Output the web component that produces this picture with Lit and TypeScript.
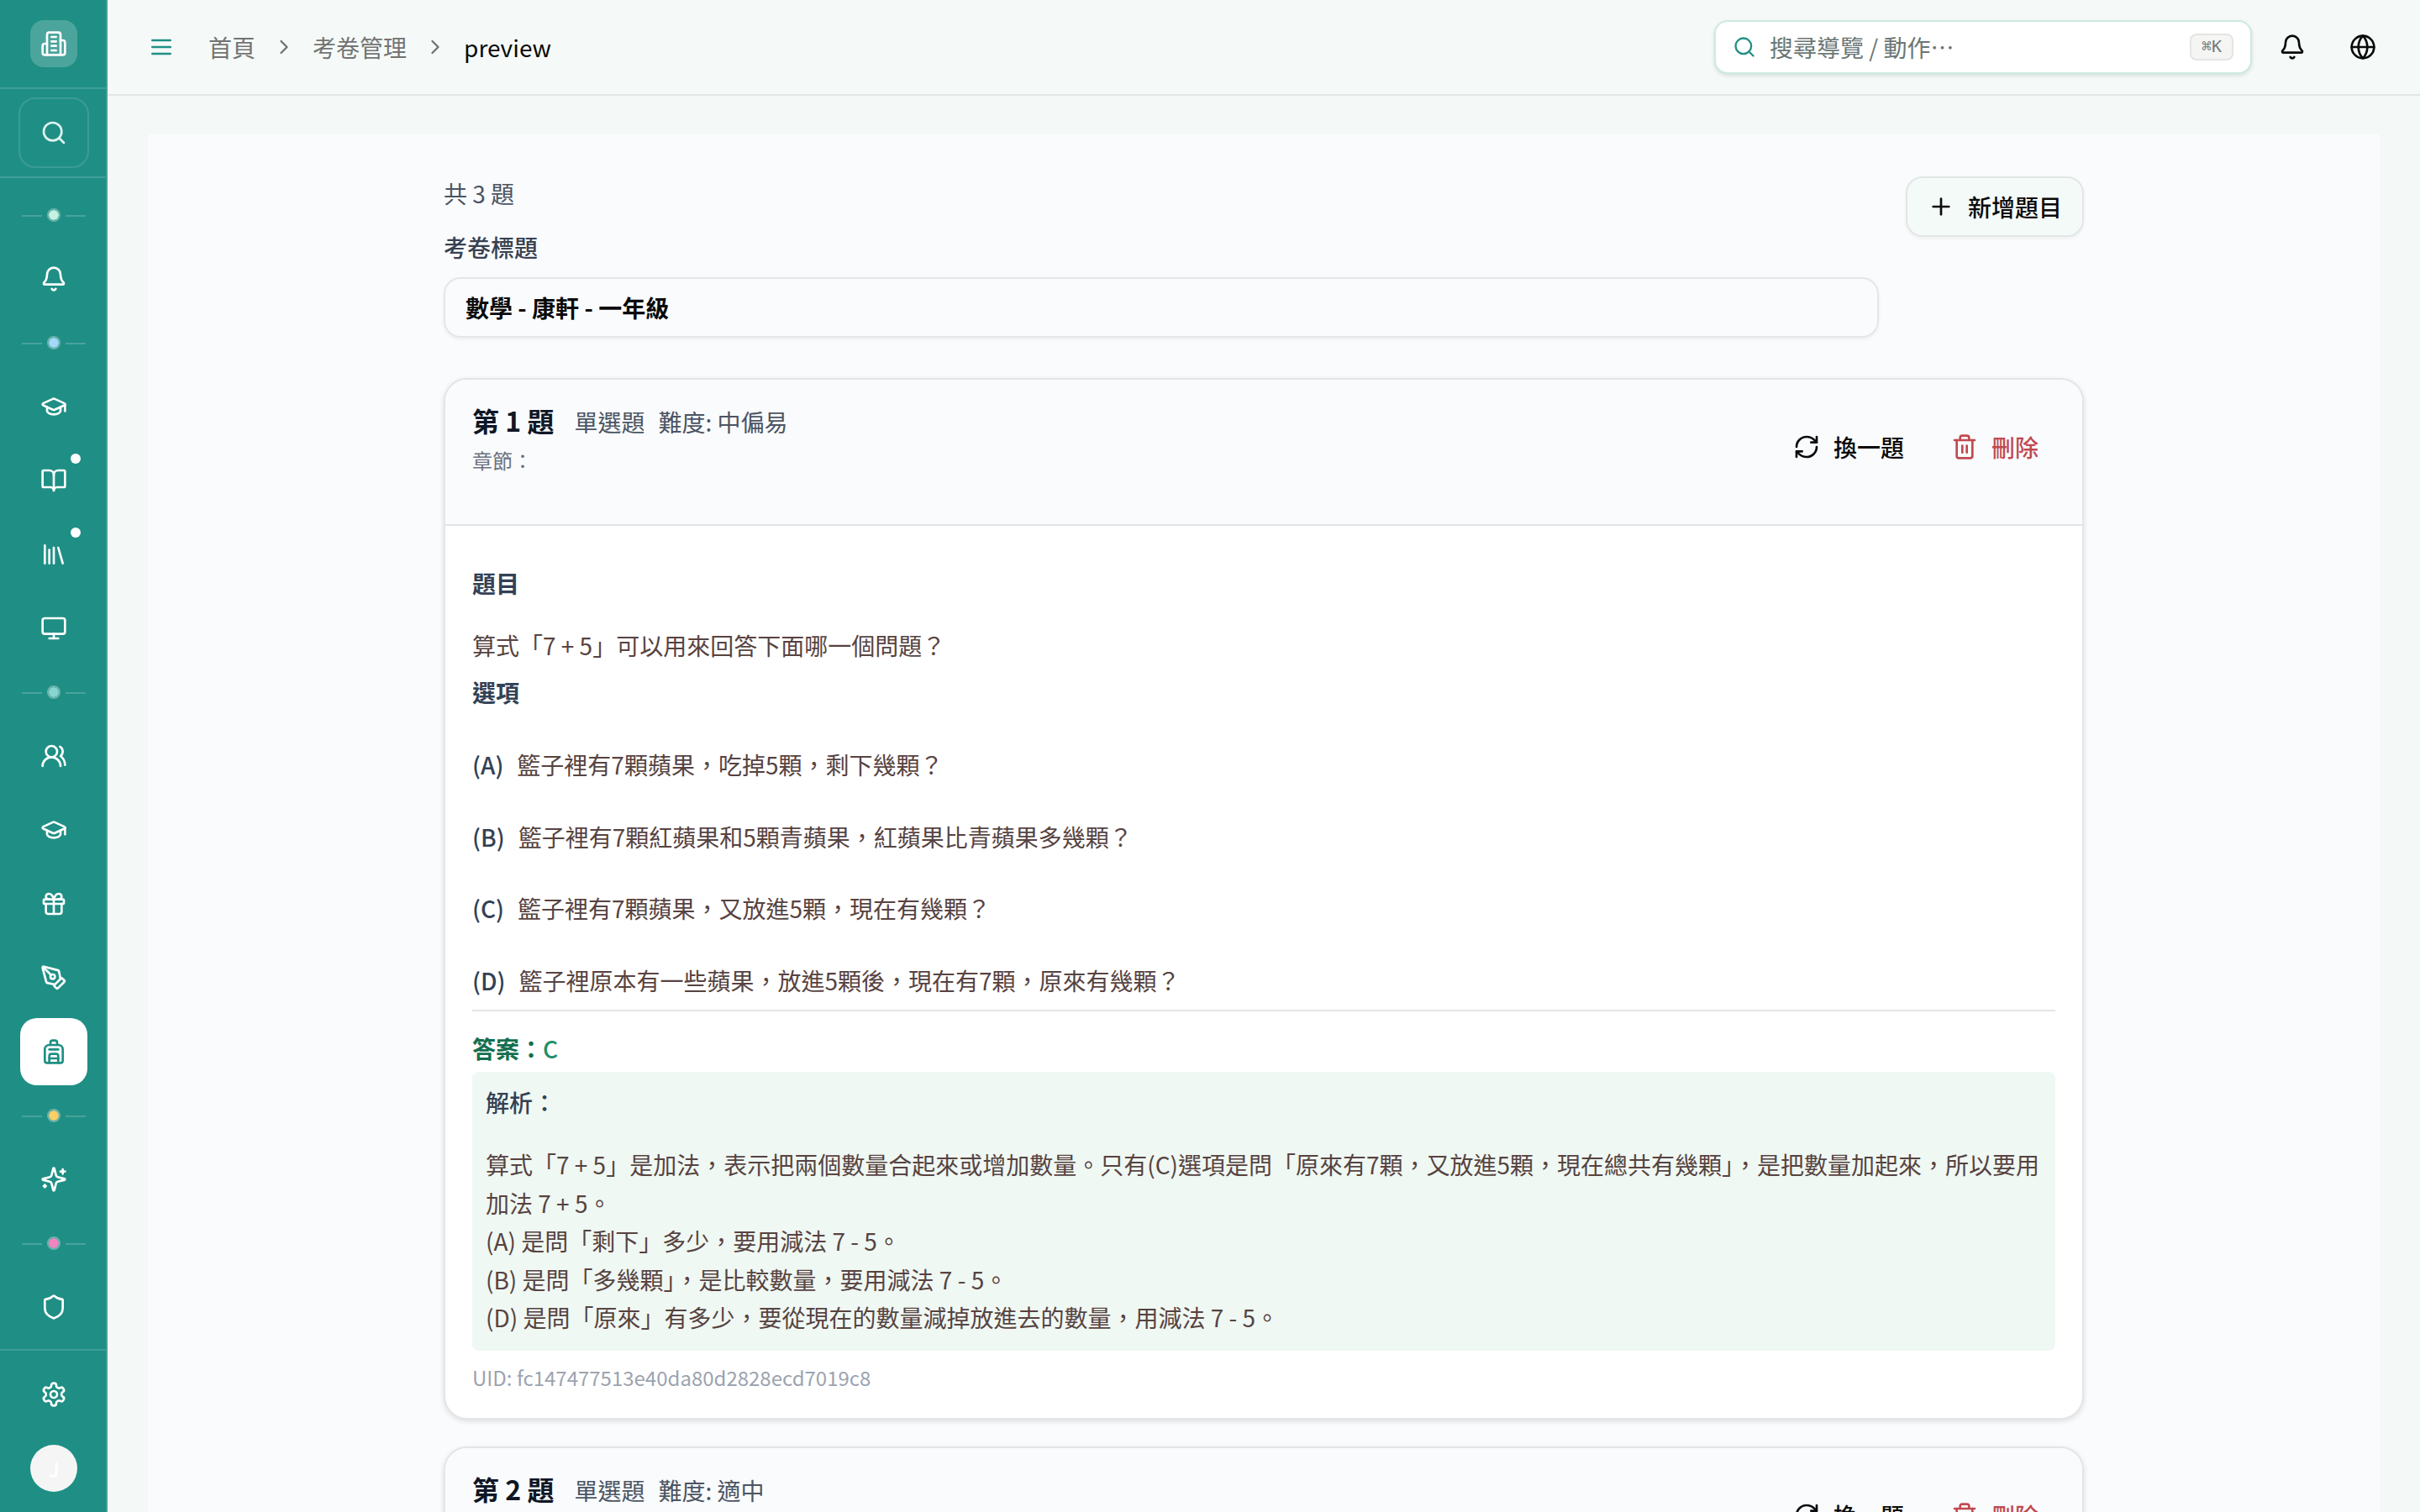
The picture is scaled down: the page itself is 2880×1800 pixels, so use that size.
import { LitElement, html, css, svg, nothing } from "lit";
import { customElement, property } from "lit/decorators.js";

const ICONS: Record<string, any> = {
  building: svg`<path d="M6 22V4a2 2 0 0 1 2-2h8a2 2 0 0 1 2 2v18Z"/><path d="M6 12H4a2 2 0 0 0-2 2v6a2 2 0 0 0 2 2h2"/><path d="M18 9h2a2 2 0 0 1 2 2v9a2 2 0 0 1-2 2h-2"/><path d="M10 6h4"/><path d="M10 10h4"/><path d="M10 14h4"/><path d="M10 18h4"/>`,
  search: svg`<circle cx="11" cy="11" r="8"/><path d="m21 21-4.3-4.3"/>`,
  bell: svg`<path d="M10.268 21a2 2 0 0 0 3.464 0"/><path d="M3.262 15.326A1 1 0 0 0 4 17h16a1 1 0 0 0 .74-1.673C19.41 13.956 18 12.499 18 8A6 6 0 0 0 6 8c0 4.499-1.411 5.956-2.738 7.326"/>`,
  cap: svg`<path d="M21.42 10.922a1 1 0 0 0-.019-1.838L12.83 5.18a2 2 0 0 0-1.66 0L2.6 9.08a1 1 0 0 0 0 1.832l8.57 3.908a2 2 0 0 0 1.66 0z"/><path d="M22 10v6"/><path d="M6 12.5V16a6 3 0 0 0 12 0v-3.5"/>`,
  book: svg`<path d="M12 7v14"/><path d="M3 18a1 1 0 0 1-1-1V4a1 1 0 0 1 1-1h5a4 4 0 0 1 4 4 4 4 0 0 1 4-4h5a1 1 0 0 1 1 1v13a1 1 0 0 1-1 1h-6a3 3 0 0 0-3 3 3 3 0 0 0-3-3z"/>`,
  library: svg`<path d="m16 6 4 14"/><path d="M12 6v14"/><path d="M8 8v12"/><path d="M4 4v16"/>`,
  monitor: svg`<rect width="20" height="14" x="2" y="3" rx="2"/><path d="M8 21h8"/><path d="M12 17v4"/>`,
  users: svg`<path d="M18 21a8 8 0 0 0-16 0"/><circle cx="10" cy="8" r="5"/><path d="M22 20c0-3.37-2-6.5-4-8a5 5 0 0 0-.45-8.3"/>`,
  gift: svg`<rect x="3" y="8" width="18" height="4" rx="1"/><path d="M12 8v13"/><path d="M19 12v7a2 2 0 0 1-2 2H7a2 2 0 0 1-2-2v-7"/><path d="M7.5 8a2.5 2.5 0 0 1 0-5A4.8 8 0 0 1 12 8a4.8 8 0 0 1 4.5-5 2.5 2.5 0 0 1 0 5"/>`,
  pen: svg`<path d="M15.707 21.293a1 1 0 0 1-1.414 0l-1.586-1.586a1 1 0 0 1 0-1.414l5.586-5.586a1 1 0 0 1 1.414 0l1.586 1.586a1 1 0 0 1 0 1.414z"/><path d="m18 13-1.375-6.874a1 1 0 0 0-.746-.776L3.235 2.028a1 1 0 0 0-1.207 1.207L5.35 15.879a1 1 0 0 0 .776.746L13 18"/><path d="m2.3 2.3 7.286 7.286"/><circle cx="11" cy="11" r="2"/>`,
  backpack: svg`<path d="M4 10a4 4 0 0 1 4-4h8a4 4 0 0 1 4 4v10a2 2 0 0 1-2 2H6a2 2 0 0 1-2-2z"/><path d="M8 10h8"/><path d="M8 18h8"/><path d="M8 22v-6a2 2 0 0 1 2-2h4a2 2 0 0 1 2 2v6"/><path d="M9 6V4a2 2 0 0 1 2-2h2a2 2 0 0 1 2 2v2"/>`,
  sparkles: svg`<path d="M9.937 15.5A2 2 0 0 0 8.5 14.063l-6.135-1.582a.5.5 0 0 1 0-.962L8.5 9.936A2 2 0 0 0 9.937 8.5l1.582-6.135a.5.5 0 0 1 .963 0L14.063 8.5A2 2 0 0 0 15.5 9.937l6.135 1.581a.5.5 0 0 1 0 .964L15.5 14.063a2 2 0 0 0-1.437 1.437l-1.582 6.135a.5.5 0 0 1-.963 0z"/><path d="M20 3v4"/><path d="M22 5h-4"/><path d="M4 17v2"/><path d="M5 18H3"/>`,
  shield: svg`<path d="M20 13c0 5-3.5 7.5-7.66 8.95a1 1 0 0 1-.67-.01C7.5 20.5 4 18 4 13V6a1 1 0 0 1 1-1c2 0 4.5-1.2 6.24-2.72a1.17 1.17 0 0 1 1.52 0C14.51 3.81 17 5 19 5a1 1 0 0 1 1 1z"/>`,
  settings: svg`<path d="M12.22 2h-.44a2 2 0 0 0-2 2v.18a2 2 0 0 1-1 1.73l-.43.25a2 2 0 0 1-2 0l-.15-.08a2 2 0 0 0-2.73.73l-.22.38a2 2 0 0 0 .73 2.73l.15.1a2 2 0 0 1 1 1.72v.51a2 2 0 0 1-1 1.74l-.15.09a2 2 0 0 0-.73 2.73l.22.38a2 2 0 0 0 2.73.73l.15-.08a2 2 0 0 1 2 0l.43.25a2 2 0 0 1 1 1.73V20a2 2 0 0 0 2 2h.44a2 2 0 0 0 2-2v-.18a2 2 0 0 1 1-1.73l.43-.25a2 2 0 0 1 2 0l.15.08a2 2 0 0 0 2.73-.73l.22-.39a2 2 0 0 0-.73-2.73l-.15-.08a2 2 0 0 1-1-1.74v-.5a2 2 0 0 1 1-1.74l.15-.09a2 2 0 0 0 .73-2.73l-.22-.38a2 2 0 0 0-2.73-.73l-.15.08a2 2 0 0 1-2 0l-.43-.25a2 2 0 0 1-1-1.73V4a2 2 0 0 0-2-2z"/><circle cx="12" cy="12" r="3"/>`,
  menu: svg`<path d="M4 6h16"/><path d="M4 12h16"/><path d="M4 18h16"/>`,
  chevron: svg`<path d="m9 18 6-6-6-6"/>`,
  globe: svg`<circle cx="12" cy="12" r="10"/><path d="M12 2a14.5 14.5 0 0 0 0 20 14.5 14.5 0 0 0 0-20"/><path d="M2 12h20"/>`,
  plus: svg`<path d="M5 12h14"/><path d="M12 5v14"/>`,
  refresh: svg`<path d="M3 12a9 9 0 0 1 9-9 9.75 9.75 0 0 1 6.74 2.74L21 8"/><path d="M21 3v5h-5"/><path d="M21 12a9 9 0 0 1-9 9 9.75 9.75 0 0 1-6.74-2.74L3 16"/><path d="M8 16H3v5"/>`,
  trash: svg`<path d="M3 6h18"/><path d="M19 6v14a2 2 0 0 1-2 2H7a2 2 0 0 1-2-2V6"/><path d="M8 6V4a2 2 0 0 1 2-2h4a2 2 0 0 1 2 2v2"/><path d="M10 11v6"/><path d="M14 11v6"/>`,
};

@customElement("ui-icon")
class UiIcon extends LitElement {
  @property() name = "";
  static styles = css`
    :host { display: block; width: 32px; height: 32px; flex: none; }
    svg { display: block; width: 100%; height: 100%; fill: none; stroke: currentColor; stroke-width: 2; stroke-linecap: round; stroke-linejoin: round; }
  `;
  render() {
    return html`<svg viewBox="0 0 24 24">${ICONS[this.name]}</svg>`;
  }
}

type NavEntry = { dot?: string; icon?: string; badge?: boolean; active?: boolean };

const NAV: NavEntry[] = [
  { dot: "#c3f3e0" },
  { icon: "bell" },
  { dot: "#a2d8f8" },
  { icon: "cap" },
  { icon: "book", badge: true },
  { icon: "library", badge: true },
  { icon: "monitor" },
  { dot: "#86d5d0" },
  { icon: "users" },
  { icon: "cap" },
  { icon: "gift" },
  { icon: "pen" },
  { icon: "backpack", active: true },
  { dot: "#fdd065" },
  { icon: "sparkles" },
  { dot: "#f285c1" },
  { icon: "shield" },
];

@customElement("side-rail")
class SideRail extends LitElement {
  static styles = css`
    :host { box-sizing: border-box; display: flex; flex-direction: column; width: 128px; height: 1800px; flex: none; background: #1f8f85; border-right: 2px solid #459f98; color: #fff; }
    .brand { box-sizing: border-box; height: 106px; padding: 24px 0 0 36px; border-bottom: 2px solid #3f9e96; }
    .logo { display: grid; place-items: center; width: 56px; height: 56px; border-radius: 16px; background: #4ca59c; }
    .find { box-sizing: border-box; height: 106px; padding: 10px 0 0 22px; border-bottom: 2px solid #3f9e96; }
    .find-box { box-sizing: border-box; display: grid; place-items: center; width: 84px; height: 84px; border: 2px solid #3b9c93; border-radius: 20px; color: #e0f3f0; }
    nav { flex: 1; padding: 8px 0 0 24px; display: flex; flex-direction: column; }
    .item { position: relative; display: grid; place-items: center; width: 80px; height: 80px; border-radius: 20px; }
    .item + .item { margin-top: 8px; }
    .item.active { background: #fff; color: #1f8f85; }
    .badge { position: absolute; top: 8px; right: 8px; width: 12px; height: 12px; border-radius: 50%; background: #fff; }
    .sep { display: flex; align-items: center; justify-content: center; gap: 6px; width: 80px; height: 72px; }
    .line { flex: none; width: 24px; height: 2px; margin-top: 2px; background: #48a39b; }
    .dot { flex: none; box-sizing: border-box; width: 16px; height: 16px; border-radius: 50%; border: 2px solid #6cb3ad; background-clip: padding-box; }
    .foot { box-sizing: border-box; height: 194px; padding: 12px 0 0 24px; border-top: 2px solid #3f9e96; }
    .avatar { display: grid; place-items: center; width: 56px; height: 56px; margin: 20px 0 0 12px; border-radius: 50%; background: #f5f5f5; color: #fff; font-size: 24px; font-weight: 500; }
  `;
  render() {
    return html`
      <div class="brand"><div class="logo"><ui-icon name="building"></ui-icon></div></div>
      <div class="find"><div class="find-box"><ui-icon name="search"></ui-icon></div></div>
      <nav>
        ${NAV.map((n) =>
          n.dot
            ? html`<div class="sep"><span class="line"></span><span class="dot" style="background-color:${n.dot}"></span><span class="line"></span></div>`
            : html`<div class="item ${n.active ? "active" : ""}"><ui-icon name=${n.icon!}></ui-icon>${n.badge ? html`<span class="badge"></span>` : nothing}</div>`
        )}
      </nav>
      <div class="foot">
        <div class="item"><ui-icon name="settings"></ui-icon></div>
        <div class="avatar">J</div>
      </div>
    `;
  }
}

@customElement("top-bar")
class TopBar extends LitElement {
  static styles = css`
    :host { box-sizing: border-box; display: flex; align-items: center; height: 114px; padding: 0 52px 0 48px; border-bottom: 2px solid #e2e7e6; background: #f5faf8; font-size: 28px; line-height: 40px; }
    .menu { color: #1f8f85; margin-right: 40px; }
    .crumbs { display: flex; align-items: center; gap: 20px; color: #737373; flex: 1; }
    .crumbs ui-icon { width: 28px; height: 28px; }
    .here { color: #0a0a0a; }
    .search { box-sizing: border-box; display: flex; align-items: center; width: 640px; height: 64px; padding: 0 20px; border: 2px solid #cdeae1; border-radius: 16px; background: #fff; color: #6b7775; box-shadow: 0 2px 5px rgba(0, 0, 0, 0.12); margin-right: 32px; }
    .search ui-icon { width: 28px; height: 28px; color: #1f8f85; margin-right: 16px; }
    .hint { flex: 1; }
    kbd { box-sizing: border-box; display: grid; place-items: center; width: 52px; height: 32px; border: 2px solid #e2e5e3; border-radius: 8px; background: #f5f5f4; font: 20px/24px "DejaVu Sans Mono", monospace; padding-bottom: 2px; color: #737a77; }
    .bell { margin-right: 52px; }
  `;
  render() {
    return html`
      <ui-icon class="menu" name="menu"></ui-icon>
      <div class="crumbs">
        <span>首頁</span><ui-icon name="chevron"></ui-icon><span>考卷管理</span><ui-icon name="chevron"></ui-icon><span class="here">preview</span>
      </div>
      <div class="search"><ui-icon name="search"></ui-icon><span class="hint">搜尋導覽 / 動作⋯</span><kbd>⌘K</kbd></div>
      <ui-icon class="bell" name="bell"></ui-icon>
      <ui-icon name="globe"></ui-icon>
    `;
  }
}

type Question = { no: number; kind: string; level: string; stem: string; options: string[]; answer: string; notes: string[]; uid: string };

const QUESTIONS: Question[] = [
  {
    no: 1,
    kind: "單選題",
    level: "中偏易",
    stem: "算式「7 + 5」可以用來回答下面哪一個問題？",
    options: [
      "籃子裡有7顆蘋果，吃掉5顆，剩下幾顆？",
      "籃子裡有7顆紅蘋果和5顆青蘋果，紅蘋果比青蘋果多幾顆？",
      "籃子裡有7顆蘋果，又放進5顆，現在有幾顆？",
      "籃子裡原本有一些蘋果，放進5顆後，現在有7顆，原來有幾顆？",
    ],
    answer: "C",
    notes: [
      "算式「7 + 5」是加法，表示把兩個數量合起來或增加數量。只有(C)選項是問「原來有7顆，又放進5顆，現在總共有幾顆」，是把數量加起來，所以要用加法 7 + 5。",
      "(A) 是問「剩下」多少，要用減法 7 - 5。",
      "(B) 是問「多幾顆」，是比較數量，要用減法 7 - 5。",
      "(D) 是問「原來」有多少，要從現在的數量減掉放進去的數量，用減法 7 - 5。",
    ],
    uid: "fc147477513e40da80d2828ecd7019c8",
  },
  { no: 2, kind: "單選題", level: "適中", stem: "", options: [], answer: "", notes: [], uid: "" },
];

@customElement("question-card")
class QuestionCard extends LitElement {
  @property({ attribute: false }) q!: Question;
  static styles = css`
    :host { box-sizing: border-box; display: block; border: 2px solid #e3e5e7; border-radius: 28px; overflow: hidden; background: #fff; box-shadow: 0 2px 6px rgba(0, 0, 0, 0.12); font-size: 28px; }
    .head { box-sizing: border-box; display: flex; justify-content: space-between; height: 174px; padding: 26px 32px 0; border-bottom: 2px solid #e3e5e6; background: #fafbfd; }
    .title { display: flex; align-items: baseline; line-height: 44px; color: #4b5563; }
    .no { font-size: 32px; font-weight: 700; color: #0f1726; margin-right: 24px; }
    .kind { margin-right: 16px; }
    .chapter { font-size: 24px; line-height: 32px; color: #6b7280; margin-top: 8px; }
    .acts { display: flex; gap: 16px; height: 64px; margin-top: 22px; }
    .act { display: flex; align-items: center; gap: 16px; padding: 0 20px; font-weight: 500; color: #0a0a0a; }
    .act:last-child { color: #c14a50; }
    .body { padding: 48px 32px 32px; line-height: 45.5px; color: #574341; }
    .label { font-weight: 600; color: #334155; line-height: 40px; }
    .stem { margin: 32px 0 12px; }
    .options { margin-top: 44.5px; display: flex; flex-direction: column; gap: 40px; }
    .option { display: flex; gap: 16px; }
    .key { font-weight: 500; color: #334155; }
    .answer { border-top: 2px solid #e5e5e5; margin-top: 12px; padding-top: 24px; font-weight: 500; line-height: 40px; color: #1f8f66; }
    .answer b { font-weight: 700; color: #146f4e; }
    .notes { margin-top: 8px; padding: 16px; border-radius: 8px; background: #eff8f3; }
    .notes .label { font-weight: 500; }
    .lines { margin-top: 32px; }
    .uid { margin-top: 16.5px; font-size: 24px; line-height: 32px; color: #9ca3af; }
  `;
  render() {
    const q = this.q;
    return html`
      <div class="head">
        <div>
          <div class="title"><span class="no">第 ${q.no} 題</span><span class="kind">${q.kind}</span><span>難度: ${q.level}</span></div>
          <div class="chapter">章節：</div>
        </div>
        <div class="acts">
          <div class="act"><ui-icon name="refresh"></ui-icon><span>換一題</span></div>
          <div class="act"><ui-icon name="trash"></ui-icon><span>刪除</span></div>
        </div>
      </div>
      ${q.stem
        ? html`<div class="body">
            <div class="label">題目</div>
            <div class="stem">${q.stem}</div>
            <div class="label">選項</div>
            <div class="options">
              ${q.options.map((o, i) => html`<div class="option"><span class="key">(${"ABCD"[i]})</span><span>${o}</span></div>`)}
            </div>
            <div class="answer"><b>答案：</b>${q.answer}</div>
            <div class="notes">
              <div class="label">解析：</div>
              <div class="lines">${q.notes.map((n) => html`<div>${n}</div>`)}</div>
            </div>
            <div class="uid">UID: ${q.uid}</div>
          </div>`
        : nothing}
    `;
  }
}

@customElement("app-root")
class AppRoot extends LitElement {
  static styles = css`
    :host { display: flex; width: 2880px; height: 1800px; overflow: hidden; background: #f4f8f7; color: #0a0a0a; font-family: "Noto Sans CJK TC", "Noto Sans", sans-serif; }
    .main { flex: 1; min-width: 0; display: flex; flex-direction: column; }
    .scroll { flex: 1; min-height: 0; padding: 46px 48px 0; overflow: hidden; }
    .panel { box-sizing: border-box; height: 1700px; padding: 50px 352px 0; background: #fafbfd; }
    .top { display: flex; gap: 32px; align-items: flex-start; font-size: 28px; line-height: 40px; margin-bottom: 48px; }
    .fields { flex: 1; }
    .count { color: #4b5563; }
    .caption { margin-top: 24px; font-weight: 500; color: #374151; }
    .input { box-sizing: border-box; height: 72px; margin-top: 16px; padding: 14px 24px; border: 2px solid #e4e6e8; border-radius: 20px; font-weight: 700; box-shadow: 0 2px 4px rgba(0, 0, 0, 0.05); }
    .add { box-sizing: border-box; display: flex; align-items: center; gap: 16px; height: 72px; padding: 0 24px; border: 2px solid #e2e7e6; border-radius: 20px; background: #f4faf8; font-weight: 500; box-shadow: 0 2px 4px rgba(0, 0, 0, 0.05); }
    .list { display: flex; flex-direction: column; gap: 32px; }
  `;
  render() {
    return html`
      <side-rail></side-rail>
      <div class="main">
        <top-bar></top-bar>
        <div class="scroll">
          <div class="panel">
            <div class="top">
              <div class="fields">
                <div class="count">共 3 題</div>
                <div class="caption">考卷標題</div>
                <div class="input">數學 - 康軒 - 一年級</div>
              </div>
              <div class="add"><ui-icon name="plus"></ui-icon><span>新增題目</span></div>
            </div>
            <div class="list">${QUESTIONS.map((q) => html`<question-card .q=${q}></question-card>`)}</div>
          </div>
        </div>
      </div>
    `;
  }
}
